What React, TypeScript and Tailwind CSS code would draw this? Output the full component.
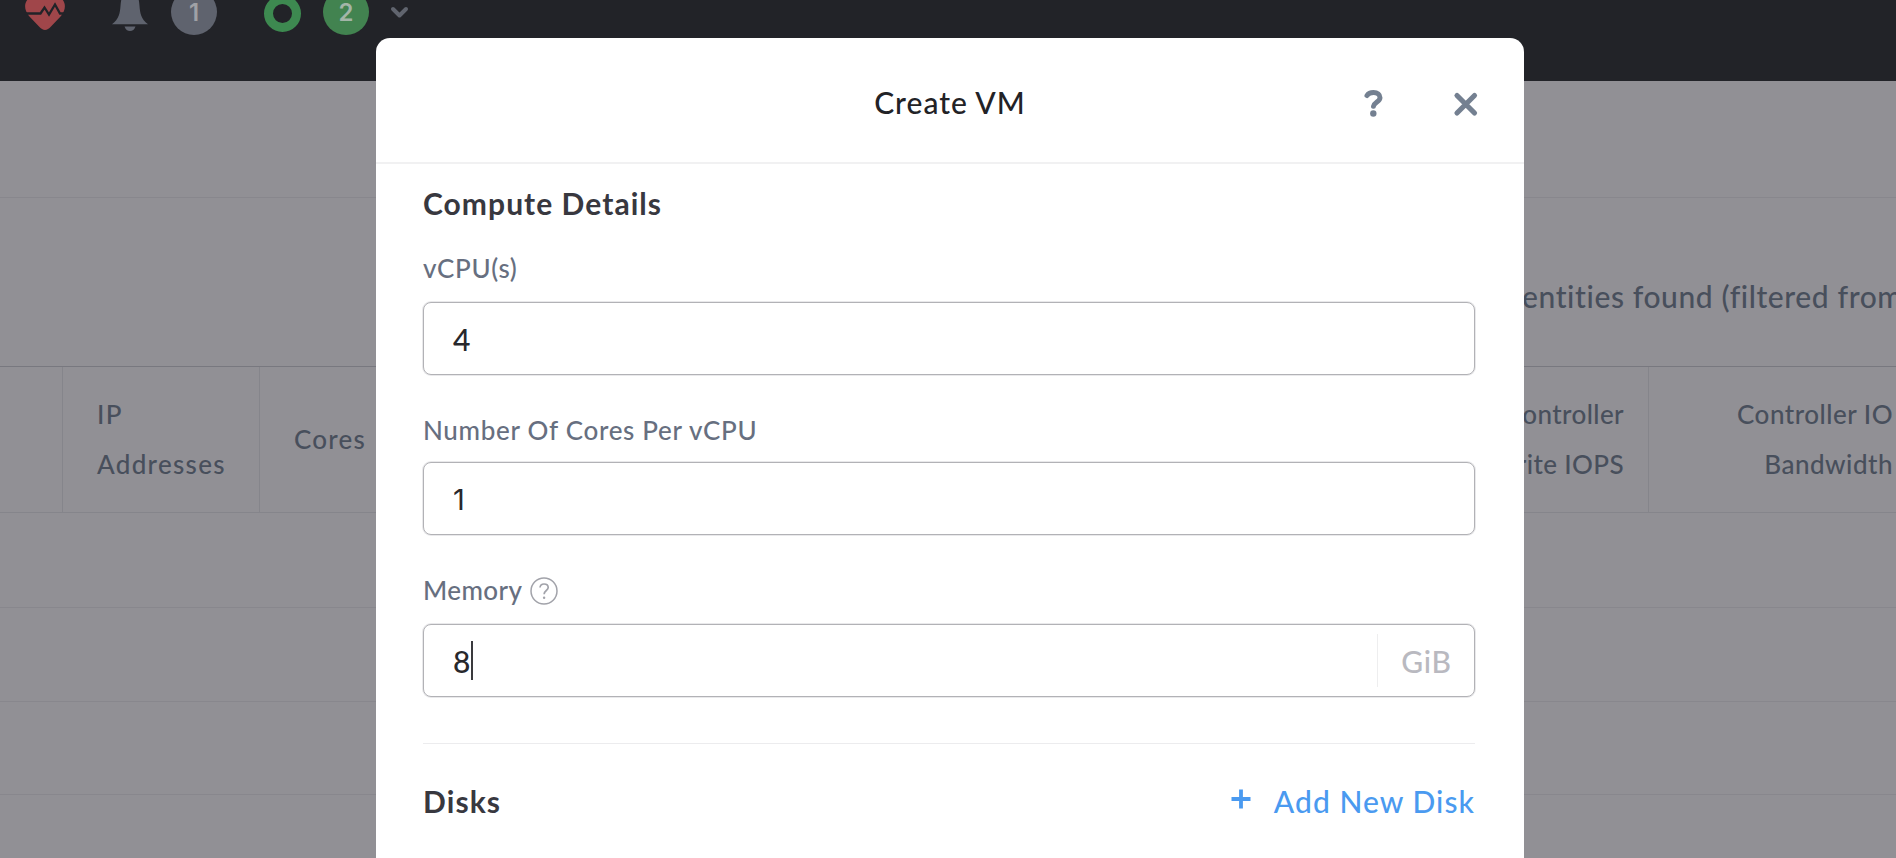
import React from "react";

function HeartIcon() {
  return (
    <svg width="42" height="34" viewBox="0 0 42 34" className="block">
      <path d="M21 34 C23 34 25 32.500 27 30.500 L37 20 C42 14 42 7 38 3 C33 -2 25 -1 21 4 C17 -1 9 -2 4 3 C0 7 0 14 5 20 L15 30.500 C17 32.500 19 34 21 34 Z" fill="#a0464a" />
      <path d="M0 17.500 H16.500 L20.500 11.500 L25 18.500 L31 8.500 L36 17.500 H42" fill="none" stroke="#222328" strokeWidth="2.300" />
    </svg>
  );
}

function BellIcon() {
  return (
    <svg width="38" height="40" viewBox="0 0 38 40" className="block">
      <path d="M19 1 C11 1 10 8 9.500 15 C9 22 8 28 1 33.300 H37 C30 28 29 22 28.500 15 C28 8 27 1 19 1 Z" fill="#5f636e" />
      <path d="M13.500 35.500 H24.500 C23.500 38.500 21.500 40 19 40 C16.500 40 14.500 38.500 13.500 35.500 Z" fill="#5f636e" />
    </svg>
  );
}

function TopBar() {
  return (
    <div className="relative h-[81px] shrink-0 overflow-hidden bg-[#222328]">
      <div className="absolute left-[24px] top-[-4px]"><HeartIcon /></div>
      <div className="absolute left-[111px] top-[-9px]"><BellIcon /></div>
      <div className="absolute left-[171px] top-[-11px] flex h-[46px] w-[46px] items-center justify-center rounded-full bg-[#5f636e] pt-[1px] font-['Inter',sans-serif] text-[24px] font-semibold leading-[22px] text-[#9fa1a6]">1</div>
      <div className="absolute left-[264px] top-[-5px] h-[37px] w-[37px] rounded-full border-[9px] border-[#3d8950]" />
      <div className="absolute left-[323px] top-[-11px] flex h-[46px] w-[46px] items-center justify-center rounded-full bg-[#428350] pt-[1px] font-['Inter',sans-serif] text-[24px] font-semibold leading-[22px] text-[#a3b5a8]">2</div>
      <svg className="absolute left-[390px] top-[5px]" width="19" height="14" viewBox="0 0 19 14">
        <path d="M3 4 L9.500 10.500 L16 4" fill="none" stroke="#60646e" strokeWidth="4" strokeLinecap="round" strokeLinejoin="round" />
      </svg>
    </div>
  );
}

function Page() {
  return (
    <div className="flex h-full flex-col font-medium text-[#484f5c]">
      <TopBar />
      <div className="h-[117px] shrink-0 border-b border-[#88878d]" />
      <div className="flex h-[169px] shrink-0 items-center border-b border-[#78787f] pl-[1522px] pt-[28px]">
        <span className="whitespace-nowrap text-[30px] leading-[40px] tracking-[0.600px]">entities found (filtered from</span>
      </div>
      <div className="flex h-[146px] shrink-0 border-b border-[#85858b] pb-[2px] text-[26px] leading-[50px]">
        <div className="-mb-[2px] w-[63px] border-r border-[#85858b]" />
        <div className="-mb-[2px] flex w-[197px] flex-col justify-center border-r border-[#85858b] pb-[2px] pl-[34px] tracking-[1.300px]">
          <span>IP</span>
          <span>Addresses</span>
        </div>
        <div className="flex w-[240px] items-center pl-[34px] tracking-[1.200px]">Cores</div>
        <div className="-mb-[2px] flex flex-1 flex-col items-end justify-center border-r border-[#85858b] pb-[2px] pr-[24px] tracking-[0.400px]">
          <span>Controller</span>
          <span>Write IOPS</span>
        </div>
        <div className="flex w-[247px] flex-col items-end justify-center pr-[3px] tracking-[0.500px]">
          <span>Controller IO</span>
          <span>Bandwidth</span>
        </div>
      </div>
      <div className="h-[95px] shrink-0 border-b border-[#88878d]" />
      <div className="h-[94px] shrink-0 border-b border-[#88878d]" />
      <div className="h-[93px] shrink-0 border-b border-[#88878d]" />
    </div>
  );
}

function FieldBox({ children }: { children: React.ReactNode }) {
  return (
    <div className="flex h-[73px] items-center rounded-[8px] border border-[#b2b2b6] bg-white pl-[29px] text-[30px] font-medium leading-[40px] text-[#28282c] shadow-[0_0_0_1px_#e9e9eb]">
      {children}
    </div>
  );
}

function Modal() {
  return (
    <div className="absolute bottom-0 left-[376px] top-[38px] w-[1148px] rounded-t-[14px] bg-white">
      <div className="relative flex h-[126px] items-center justify-center border-b-2 border-[#f1f1f2] pt-[3px]">
        <span className="text-[30px] font-medium leading-[40px] tracking-[1px] text-[#222226]">Create VM</span>
        <svg className="absolute left-[986px] top-[50px]" width="24" height="32" viewBox="0 0 24 32">
          <path d="M5 7.500 C6.500 5.200 9 4.600 11.500 4.600 C15.500 4.600 18 6.500 18 9.700 C18 13.500 12 14.200 11.500 18.200" fill="none" stroke="#748091" strokeWidth="5" strokeLinecap="round" />
          <circle cx="11.300" cy="25.500" r="3.200" fill="#748091" />
        </svg>
        <svg className="absolute left-[1076px] top-[52px]" width="28" height="28" viewBox="0 0 28 28">
          <path d="M5 5.500 L22.500 23 M22.500 5.500 L5 23" stroke="#748091" strokeWidth="5.200" strokeLinecap="round" />
        </svg>
      </div>
      <div className="flex flex-col pl-[47px] pr-[49px] pt-[19px] text-[#676f80]">
        <h2 className="h-[40px] text-[30px] font-bold leading-[40px] tracking-[1.050px] text-[#38383f]">Compute Details</h2>
        <label className="mt-[25px] h-[40px] text-[26px] font-medium leading-[40px] tracking-[0.650px]">vCPU(s)</label>
        <div className="mt-[14px]"><FieldBox>4</FieldBox></div>
        <label className="mt-[35px] h-[40px] text-[26px] font-medium leading-[40px] tracking-[0.700px]">Number Of Cores Per vCPU</label>
        <div className="mt-[12px]"><FieldBox><span className="pt-[2px] font-['Inter',sans-serif] text-[29px] font-normal">1</span></FieldBox></div>
        <div className="mt-[35px] flex h-[40px] items-center gap-[8px]">
          <label className="text-[26px] font-medium leading-[40px] tracking-[0.400px]">Memory</label>
          <svg width="28" height="28" viewBox="0 0 28 28" className="mt-[1px]">
            <circle cx="14" cy="14" r="13" fill="none" stroke="#a2a3aa" strokeWidth="1.500" />
            <path d="M10 10.500 C10.300 8 12 7 14 7 C16.500 7 18.200 8.300 18.200 10.500 C18.200 13.600 14.100 13.500 14.100 17.300" fill="none" stroke="#a2a3aa" strokeWidth="1.700" />
            <circle cx="14.100" cy="20.700" r="1.200" fill="#a2a3aa" />
          </svg>
        </div>
        <div className="mt-[14px]">
          <FieldBox>
            <span>8</span>
            <span className="ml-[1px] h-[39px] w-[1.500px] bg-[#3a3a3e]" />
            <span className="ml-auto flex h-[53px] w-[97px] items-center justify-center border-l border-[#eeeeef] pl-[1px] text-[30px] tracking-[0.700px] text-[#b9b9c0]">GiB</span>
          </FieldBox>
        </div>
        <div className="mt-[46px] border-t border-[#ececee]" />
        <div className="mt-[37px] flex h-[40px] items-center justify-between">
          <h2 className="text-[30px] font-bold leading-[40px] tracking-[1.100px] text-[#38383f]">Disks</h2>
          <div className="flex items-center gap-[23px] text-[30px] font-medium leading-[40px] text-[#4a9af0]">
            <svg width="20" height="20" viewBox="0 0 20 20" className="mb-[4px]">
              <path d="M10 0.500 V19.500 M0.500 10 H19.500" stroke="#4a9af0" strokeWidth="3.800" />
            </svg>
            <span className="tracking-[1.050px]">Add New Disk</span>
          </div>
        </div>
      </div>
    </div>
  );
}

export default function App() {
  return (
    <div className="relative h-[858px] w-[1896px] overflow-hidden bg-[#919095] font-['Lato',sans-serif]">
      <Page />
      <Modal />
    </div>
  );
}
